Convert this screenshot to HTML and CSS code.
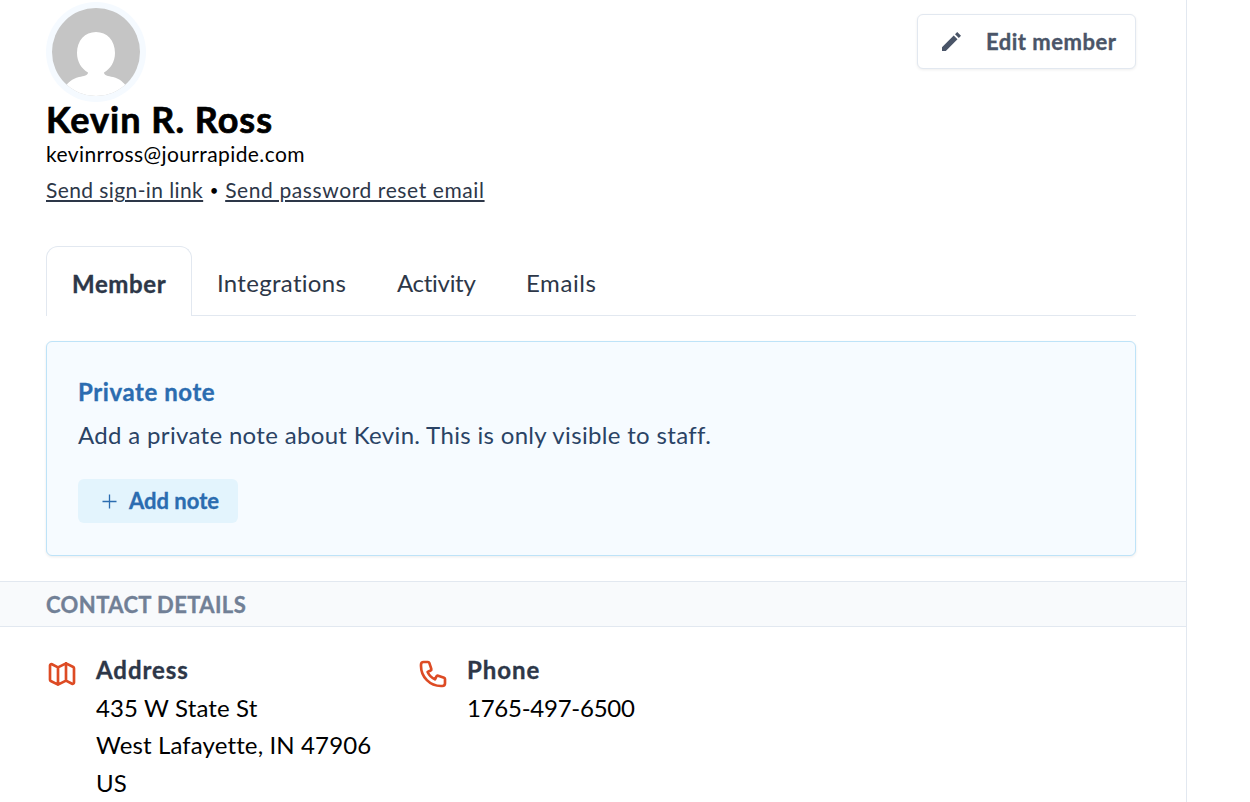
FILE: index.html
```html
<!DOCTYPE html>
<html lang="en">
<head>
<meta charset="utf-8">
<title>Kevin R. Ross</title>
<link rel="stylesheet" href="styles.css">
</head>
<body>
<main class="panel">
  <header class="profile">
    <div class="identity">
      <svg class="avatar" viewBox="0 0 100 100" aria-hidden="true">
        <defs><clipPath id="face"><circle cx="50" cy="50" r="44"/></clipPath></defs>
        <circle cx="50" cy="50" r="50" fill="#f5faff"/>
        <g clip-path="url(#face)">
          <rect width="100" height="100" fill="#c5c5c5"/>
          <path fill="#fff" d="M50 30c11 0 19 8.500 19 21 0 9-4.500 15.500-11 19.500 0 3 4 3.500 9 4.500 7 2 11 5.500 13.500 10V100H19.500V85C22 80 26 77 33 75c5-1 9-1.500 9-4.500-6.500-4-11-10.500-11-19.500 0-12.500 8-21 19-21z"/>
        </g>
      </svg>
      <h1 class="name">Kevin R. Ross</h1>
      <div class="email">kevinrross@jourrapide.com</div>
      <div class="links"><a class="link link-signin" href="#">Send sign-in link</a><span class="dot">•</span><a class="link link-reset" href="#">Send password reset email</a></div>
    </div>
    <button class="edit">
      <svg class="pencil" viewBox="0 0 20 20" fill="currentColor"><path d="M12.3 3.700l4 4L4 20H0v-4L12.300 3.700zm1.400-1.400L16 0l4 4-2.300 2.300-4-4z"/></svg>
      <span>Edit member</span>
    </button>
  </header>
  <nav class="tabs">
    <a class="tab tab-active">Member</a>
    <a class="tab tab-integrations">Integrations</a>
    <a class="tab tab-activity">Activity</a>
    <a class="tab tab-emails">Emails</a>
  </nav>
  <section class="note">
    <h2 class="note-title">Private note</h2>
    <p class="note-text">Add a private note about Kevin. This is only visible to staff.</p>
    <button class="add">
      <svg class="plus" viewBox="0 0 15 15" fill="none" stroke="currentColor" stroke-width="1.300"><path d="M7.500 .5v14M.5 7.500h14"/></svg>
      <span>Add note</span>
    </button>
  </section>
  <h2 class="section-title">CONTACT DETAILS</h2>
  <section class="contact">
    <div class="entry">
      <svg class="icon" viewBox="0 0 24 24"><path d="M9 20l-5.447-2.724A1 1 0 013 16.382V5.618a1 1 0 011.447-.894L9 7m0 13l6-3m-6 3V7m6 10l4.553 2.276A1 1 0 0021 18.382V7.618a1 1 0 00-.553-.894L15 4m0 13V4m0 0L9 7"/></svg>
      <div>
        <h3 class="label">Address</h3>
        <div class="value">435 W State St</div>
        <div class="value">West Lafayette, IN 47906</div>
        <div class="value">US</div>
      </div>
    </div>
    <div class="entry">
      <svg class="icon" viewBox="0 0 24 24"><path d="M3 5a2 2 0 012-2h3.280a1 1 0 01.948.684l1.498 4.493a1 1 0 01-.502 1.210l-2.257 1.130a11.042 11.042 0 005.516 5.516l1.130-2.257a1 1 0 011.210-.502l4.493 1.498a1 1 0 01.684.949V19a2 2 0 01-2 2h-1C9.716 21 3 14.284 3 6V5z"/></svg>
      <div>
        <h3 class="label">Phone</h3>
        <div class="value phone">1765-497-6500</div>
      </div>
    </div>
  </section>
</main>
</body>
</html>
```
FILE: styles.css
```css
* { box-sizing: border-box; }
body {
  margin: 0;
  height: 802px;
  overflow: hidden;
  background: #fff;
  color: #000;
  font: 24px/37px Lato, "Liberation Sans", sans-serif;
  font-variant-ligatures: none;
  white-space: nowrap;
}
h1, h2, h3, p { margin: 0; font-size: inherit; }
h1, h2, h3, button, .tab-active { -webkit-text-stroke: .35px currentColor; }
button { font: inherit; font-weight: 700; border: 0; padding: 0; }
.panel { width: 1187px; height: 802px; border-right: 1px solid #e2e8f0; }
.profile {
  display: flex;
  justify-content: space-between;
  align-items: flex-start;
  height: 206px;
  padding: 2px 50px 0 46px;
}
.avatar { display: block; width: 100px; height: 100px; }
.name { font-size: 36px; line-height: 34px; font-weight: 700; letter-spacing: 1px; -webkit-text-stroke-width: .7px; }
.email { font-size: 21px; line-height: 36px; letter-spacing: .4px; }
.links { display: flex; font-size: 21px; line-height: 36px; }
.link { color: #2d3748; text-decoration: underline; text-decoration-thickness: 2px; text-underline-offset: 2px; }
.link-signin { letter-spacing: .4px; }
.link-reset { letter-spacing: .6px; }
.dot { width: 22px; text-align: center; font-size: 15px; }
.edit {
  display: flex;
  align-items: center;
  width: 219px;
  height: 55px;
  margin-top: 12px;
  padding: 0 0 1px 24px;
  gap: 25px;
  border: 1px solid #e2e8f0;
  border-radius: 6px;
  background: #fff;
  color: #4a5568;
  font-size: 22px;
  letter-spacing: .5px;
  box-shadow: 0 1px 3px rgba(0, 0, 0, .07);
}
.pencil { width: 19px; height: 19px; }
.tabs {
  display: flex;
  height: 70px;
  margin: 40px 50px 25px 46px;
  color: #2d3748;
  box-shadow: inset 0 -1px #e2e8f0;
}
.tab { padding: 18px 0 0 25px; }
.tab-active {
  width: 146px;
  border: 1px solid #e2e8f0;
  border-bottom: 0;
  border-radius: 12px 12px 0 0;
  background: #fff;
  font-weight: 700;
  letter-spacing: .6px;
}
.tab-integrations { width: 180px; letter-spacing: .3px; }
.tab-activity { width: 129px; letter-spacing: -.3px; }
.tab-emails { letter-spacing: .6px; }
.note {
  height: 215px;
  margin: 0 50px 25px 46px;
  padding: 31px 31px 0;
  border: 1px solid #bee3f8;
  border-radius: 6px;
  background: #f6fbff;
  color: #2a4365;
  box-shadow: 0 1px 3px rgba(0, 0, 0, .08);
}
.note-title { color: #2b6cb0; letter-spacing: .58px; }
.note-text { margin: 6px 0 26px; letter-spacing: .33px; }
.add {
  display: flex;
  align-items: center;
  gap: 12px;
  width: 160px;
  height: 44px;
  padding-left: 24px;
  border-radius: 6px;
  background: #e3f4fd;
  color: #2b6cb0;
  font-size: 22px;
}
.add span { margin-top: -2px; }
.plus { width: 15px; height: 15px; }
.section-title {
  height: 46px;
  padding-left: 46px;
  border: solid #e2e8f0;
  border-width: 1px 0;
  background: #f8fafc;
  color: #718096;
  font-size: 22px;
  line-height: 45px;
  letter-spacing: .4px;
}
.contact { display: grid; grid-template-columns: 371px 371px; padding: 25px 0 0 46px; line-height: 37.5px; }
.entry { display: grid; grid-template-columns: 50px 1fr; }
.icon {
  width: 32px;
  height: 32px;
  margin-top: 5.5px;
  fill: none;
  stroke: #dd4b24;
  stroke-width: 2;
  stroke-linecap: round;
  stroke-linejoin: round;
}
.label { color: #2d3748; line-height: 36.5px; letter-spacing: .95px; }
.value { letter-spacing: .13px; }
.phone { letter-spacing: -.25px; }
```
